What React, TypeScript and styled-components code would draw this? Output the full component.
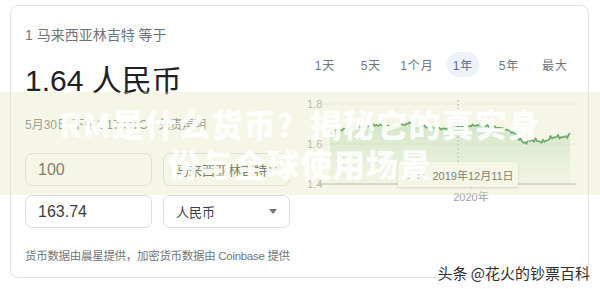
import styled, { createGlobalStyle } from "styled-components";

const GlobalStyle = createGlobalStyle`
  html, body {
    margin: 0;
    padding: 0;
    background: #ffffff;
  }
  body {
    width: 600px;
    height: 289px;
    overflow: hidden;
    font-family: "Liberation Sans", Arial, "Noto Sans CJK SC", sans-serif;
  }
`;

const Page = styled.div`
  position: relative;
  width: 600px;
  height: 289px;
  padding: 5px 11px 0 10px;
  box-sizing: border-box;
`;

const Card = styled.div`
  width: 579px;
  height: 273px;
  box-sizing: border-box;
  border: 1px solid #e1e3e6;
  border-radius: 8px;
  padding: 19px 8px 0 14px;
  display: grid;
  grid-template-columns: 265px 280px;
  column-gap: 10px;
`;

const LeftCol = styled.div`
  display: flex;
  flex-direction: column;
`;

const Subtitle = styled.div`
  font-size: 14px;
  line-height: 20px;
  color: #70757a;
`;

const Amount = styled.div`
  margin-top: 18px;
  font-size: 30px;
  line-height: 36px;
  color: #202124;
`;

const Meta = styled.div`
  margin-top: 18px;
  font-size: 12px;
  line-height: 16px;
  color: #70757a;
  white-space: nowrap;
`;

const InputRows = styled.div`
  margin-top: 20px;
  display: grid;
  grid-template-columns: 127px 127px;
  column-gap: 11px;
  row-gap: 9px;
`;

const Field = styled.div`
  height: 33px;
  box-sizing: border-box;
  border: 1px solid #dadce0;
  border-radius: 7px;
  padding: 0 12px;
  display: flex;
  align-items: center;
  justify-content: space-between;
  font-size: 16px;
  color: #3c4043;
  white-space: nowrap;
  overflow: hidden;
`;

const SelectText = styled.span`
  font-size: 13px;
  color: #3c4043;
`;

const Caret = styled.span`
  flex: none;
  width: 0;
  height: 0;
  border-left: 4px solid transparent;
  border-right: 4px solid transparent;
  border-top: 5px solid #70757a;
`;

const Source = styled.div`
  margin-top: 20px;
  font-size: 11.5px;
  line-height: 16px;
  letter-spacing: -0.3px;
  color: #70757a;
  white-space: nowrap;
`;

const RightCol = styled.div`
  display: flex;
  flex-direction: column;
`;

const Tabs = styled.div`
  margin-top: 27px;
  margin-left: 2px;
  display: flex;
`;

const Tab = styled.div<{ $active?: boolean }>`
  width: 46px;
  height: 24px;
  display: flex;
  align-items: center;
  justify-content: center;
  font-size: 12px;
  letter-spacing: 1px;
  color: ${(p) => (p.$active ? "#5a6b93" : "#70757a")};
  & > span {
    padding: 4px 6px;
    border-radius: 12px;
    background: ${(p) => (p.$active ? "#edf1f8" : "transparent")};
  }
`;

const ChartBox = styled.div`
  position: relative;
  margin-top: 19px;
  width: 280px;
  height: 110px;
`;

const Tooltip = styled.div`
  position: absolute;
  left: 98px;
  top: 67px;
  width: 120px;
  height: 25px;
  box-sizing: border-box;
  padding-left: 7px;
  display: flex;
  align-items: center;
  gap: 6px;
  background: #ffffff;
  border-radius: 2px;
  box-shadow: 0 1px 3px rgba(0, 0, 0, 0.22);
  font-size: 11px;
  color: #3c4043;
  white-space: nowrap;
`;

const TipValue = styled.span`
  color: #9aa0a6;
`;

const Band = styled.div`
  position: absolute;
  left: 0;
  top: 92px;
  width: 600px;
  height: 103px;
  background: rgba(232, 232, 190, 0.38);
  display: flex;
  justify-content: center;
  padding-top: 11px;
  box-sizing: border-box;
`;

const BandTitle = styled.div`
  width: 500px;
  text-align: center;
  font-family: "Noto Sans CJK SC", "Liberation Sans", sans-serif;
  font-weight: 900;
  font-size: 32px;
  line-height: 40px;
  letter-spacing: 1px;
  color: rgba(255, 255, 255, 0.92);
`;

const Watermark = styled.div`
  position: absolute;
  right: 10px;
  bottom: 7px;
  font-family: "Noto Sans CJK SC", sans-serif;
  font-size: 15px;
  line-height: 18px;
  color: #2f2f2f;
  text-shadow: 0 0 2px #ffffff, 0 0 2px #ffffff;
`;

const keys: [number, number][] = [
  [30, 37], [50, 33], [77, 30], [95, 32], [110, 28], [127, 32], [145, 34],
  [157, 32], [180, 30], [200, 33], [210, 36], [217, 40], [223, 48],
  [233, 45], [243, 47], [253, 42], [267, 42], [270, 38],
];

function buildLine() {
  const pts: [number, number][] = [];
  for (let x = 30; x <= 270; x += 1.5) {
    let i = 0;
    while (i < keys.length - 2 && keys[i + 1][0] < x) i++;
    const [x0, y0] = keys[i];
    const [x1, y1] = keys[i + 1];
    const t = Math.min(1, Math.max(0, (x - x0) / (x1 - x0)));
    const amp = x > 215 && x < 262 ? 2.4 : 1.3;
    const n = Math.sin(x * 1.7) * 0.6 + Math.sin(x * 3.3 + 1) * 0.4;
    pts.push([x, y0 + (y1 - y0) * t + n * amp]);
  }
  return pts;
}

function Chart() {
  const pts = buildLine();
  const line = pts.map(([x, y], i) => `${i ? "L" : "M"}${x.toFixed(1)},${y.toFixed(1)}`).join(" ");
  const area = `${line} L${pts[pts.length - 1][0]},89 L30,89 Z`;
  return (
    <svg width="280" height="110" viewBox="0 0 280 110">
      <defs>
        <linearGradient id="fillG" x1="0" y1="0" x2="0" y2="1">
          <stop offset="0" stopColor="#34a853" stopOpacity="0.28" />
          <stop offset="1" stopColor="#34a853" stopOpacity="0.02" />
        </linearGradient>
      </defs>
      <line x1="20" y1="9" x2="276" y2="9" stroke="#eceef0" strokeWidth="1" />
      <line x1="20" y1="49" x2="276" y2="49" stroke="#eceef0" strokeWidth="1" />
      <path d={area} fill="url(#fillG)" />
      <line x1="158" y1="5" x2="158" y2="89" stroke="#9aa0a6" strokeWidth="1" strokeDasharray="2 2" />
      <path d={line} fill="none" stroke="#188038" strokeWidth="1.6" strokeLinejoin="round" />
      <line x1="18" y1="89" x2="276" y2="89" stroke="#9aa0a6" strokeWidth="1" />
      <line x1="171" y1="89" x2="171" y2="93" stroke="#9aa0a6" strokeWidth="1" />
      <g fontFamily="Liberation Sans, Arial, Noto Sans CJK SC, sans-serif" fontSize="11" fill="#9aa0a6">
        <text x="7" y="13">1.8</text>
        <text x="7" y="53">1.6</text>
        <text x="7" y="93">1.4</text>
        <text x="171" y="106" textAnchor="middle">2020年</text>
      </g>
    </svg>
  );
}

const tabs = ["1天", "5天", "1个月", "1年", "5年", "最大"];

export default function App() {
  return (
    <>
      <GlobalStyle />
      <Page>
        <Card>
          <LeftCol>
            <Subtitle>1 马来西亚林吉特 等于</Subtitle>
            <Amount>1.64 人民币</Amount>
            <Meta>5月30日 下午1:17 UTC · 免责声明</Meta>
            <InputRows>
              <Field>100</Field>
              <Field>
                <SelectText>马来西亚林吉特</SelectText>
                <Caret />
              </Field>
              <Field>163.74</Field>
              <Field>
                <SelectText>人民币</SelectText>
                <Caret />
              </Field>
            </InputRows>
            <Source>货币数据由晨星提供，加密货币数据由 Coinbase 提供</Source>
          </LeftCol>
          <RightCol>
            <Tabs>
              {tabs.map((t) => (
                <Tab key={t} $active={t === "1年"}>
                  <span>{t}</span>
                </Tab>
              ))}
            </Tabs>
            <ChartBox>
              <Chart />
              <Tooltip>
                <TipValue>1.67</TipValue>
                <span>2019年12月11日</span>
              </Tooltip>
            </ChartBox>
          </RightCol>
        </Card>
        <Band>
          <BandTitle>RM是什么货币？揭秘它的真实身份与全球使用场景</BandTitle>
        </Band>
        <Watermark>头条 @花火的钞票百科</Watermark>
      </Page>
    </>
  );
}
